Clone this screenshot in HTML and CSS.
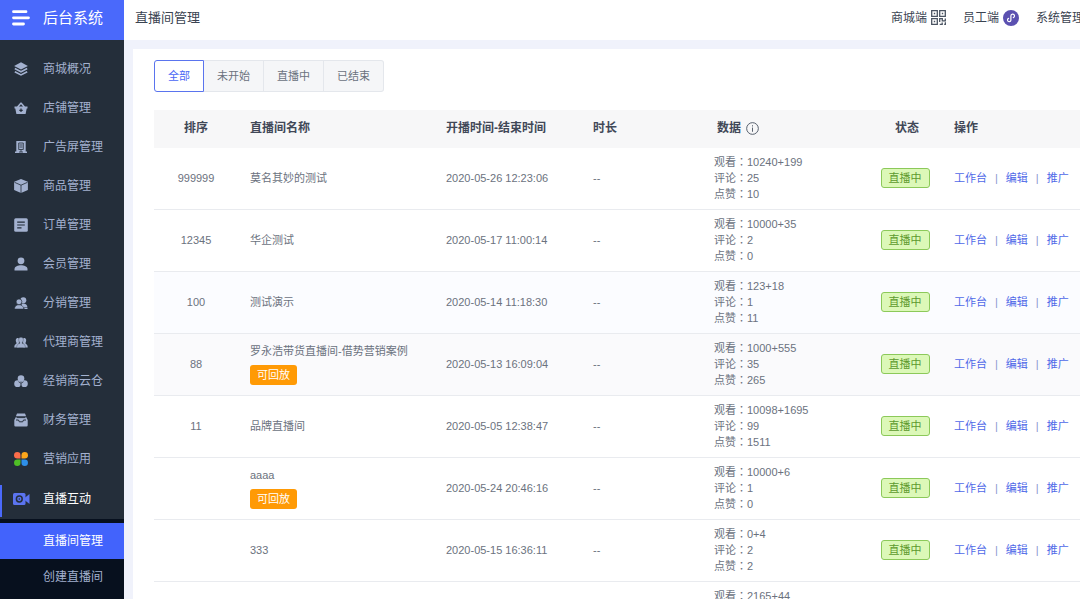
FILE: index.html
```html
<!DOCTYPE html>
<html lang="zh-CN">
<head>
<meta charset="utf-8">
<title>直播间管理</title>
<link rel="stylesheet" href="styles.css">
</head>
<body>
<div class="app">
  <aside class="sidebar">
    <div class="brand">
      <svg class="brand-icon" viewBox="0 0 18 16"><path d="M1.5 1.7H14M1.5 7.8H16.5M1.5 14H11.5" stroke="#fff" stroke-width="2.8" stroke-linecap="round"/></svg>
      <span>后台系统</span>
    </div>
    <nav class="menu">
      <a class="item" href="#"><svg class="ico" viewBox="0 0 14 14"><path d="M7 .3 13.900 4 7 7.600.1 4z"/><path d="M.8 6.500 7 9.700 13.200 6.500M.8 9.700 7 12.900 13.200 9.700" fill="none" stroke="currentColor" stroke-width="1.700"/></svg>商城概况</a>
      <a class="item" href="#"><svg class="ico" viewBox="0 0 14 14"><path d="M.5 5.500H3L6.500 1.500h1L11 5.500h2.500v2h-.8L11.600 13H2.400L1.300 7.500H.5zM5 5.500h4L7 3.200z" fill-rule="evenodd"/><path d="M7 7.500v3.500M5.300 9.300h3.400" stroke="#242e3a" stroke-width="1.200"/></svg>店铺管理</a>
      <a class="item" href="#"><svg class="ico" viewBox="0 0 14 14"><path d="M2.300 1h9.400v10.500H13V13H1v-1.500h1.300z"/><path d="M4.700 3h4.600v6.500H4.700zM7 9.500V12M5 12h4" fill="none" stroke="#242e3a" stroke-width=".8"/><path d="M5.500 5h3M5.500 7h3" stroke="#242e3a" stroke-width=".8"/></svg>广告屏管理</a>
      <a class="item" href="#"><svg class="ico" viewBox="0 0 14 14"><path d="M7 0 13.900 2.800V11L7 14 .1 11V2.800z"/><path d="M.5 3.300 7 6.200l6.500-2.900M7 6.200V14" fill="none" stroke="#242e3a" stroke-width=".8"/></svg>商品管理</a>
      <a class="item" href="#"><svg class="ico" viewBox="0 0 14 14"><rect x=".2" y=".2" width="13.600" height="13.600" rx="1.500"/><path d="M3.200 4.200h7.600M3.200 7h7.600M3.200 9.900h4.300" stroke="#242e3a" stroke-width="1.200"/></svg>订单管理</a>
      <a class="item" href="#"><svg class="ico" viewBox="0 0 14 14"><circle cx="7" cy="3.800" r="3.400"/><path d="M.5 13.500v-1.500C.5 9.400 4 8.200 7 8.200s6.500 1.200 6.500 3.800v1.500z"/></svg>会员管理</a>
      <a class="item" href="#"><svg class="ico" viewBox="0 0 14 14"><circle cx="9.300" cy="4.200" r="3"/><path d="M7.500 7.800c3-.8 5.800.2 6 3.700H8z"/><circle cx="5" cy="5.800" r="2.900" stroke="#242e3a" stroke-width=".7"/><path d="M.5 13c0-2.700 2-4.200 4.500-4.200S9.700 10.300 9.700 13z" stroke="#242e3a" stroke-width=".5"/><path d="M10.500 13h3v-1H10.300z"/></svg>分销管理</a>
      <a class="item" href="#"><svg class="ico" viewBox="0 0 14 14"><path d="M3.800 3C5 3 5.500 4 5.400 5.500L4.800 8v4.500H.3C.2 10 1.200 9.300 2.400 8.700V7.500C1.300 5.500 1.700 3 3.800 3zM10.200 3C9 3 8.500 4 8.600 5.500L9.200 8v4.500h4.500c.1-2.500-.9-3.200-2.100-3.800V7.500c1.100-2 .7-4.500-1.400-4.500z"/><path d="M7 2.300c1.700 0 2.500 1.200 2.300 2.800-.1 1-.5 1.700-.9 2.300v1c1.700.6 3 1.300 3 4.400H2.600c0-3.100 1.300-3.800 3-4.400v-1c-.4-.6-.8-1.300-.9-2.300C4.500 3.500 5.300 2.300 7 2.300z" stroke="#242e3a" stroke-width=".3"/></svg>代理商管理</a>
      <a class="item" href="#"><svg class="ico" viewBox="0 0 14 14"><circle cx="7" cy="4.500" r="3.300"/><circle cx="3.600" cy="9.700" r="3.400"/><circle cx="10.400" cy="9.700" r="3.400"/><path d="M4.500 7.700 7 9.300l2.500-1.600M7 9.300v3" fill="none" stroke="#242e3a" stroke-width=".8"/></svg>经销商云仓</a>
      <a class="item" href="#"><svg class="ico" viewBox="0 0 14 14"><path d="M3 .5h8L12 3H2zM2 3.700h10L13.700 7v5.300q0 1.200-1.200 1.200h-11Q.3 13.500.3 12.300V7z"/><path d="M2.500 4.600h9M2 7h2.500l.8 1.800h3.400L9.500 7H12" fill="none" stroke="#242e3a"/></svg>财务管理</a>
      <a class="item" href="#"><svg class="ico" viewBox="0 0 14 14"><path d="M3.300 0A3.200 3.200 0 1 0 3.300 6.500H6.500V3.200A3.200 3.200 0 0 0 3.300 0z" fill="#fb6d4a"/><path d="M10.700 0a3.200 3.200 0 1 1 0 6.500H7.500V3.200A3.200 3.200 0 0 1 10.700 0z" fill="#fba61b"/><path d="M3.300 14a3.200 3.200 0 1 1 0-6.500h3.200v3.300A3.200 3.200 0 0 1 3.300 14z" fill="#4fbf26"/><path d="M10.700 14a3.200 3.200 0 1 0 0-6.500H7.500v3.300a3.200 3.200 0 0 0 3.200 3.200z" fill="#2e8fe8"/></svg>营销应用</a>
      <a class="item current" href="#"><svg class="ico wide" viewBox="0 0 17 12"><rect width="12.500" height="12" rx="1.500"/><path d="M11.500 5 16.500 1v10l-5-4z"/><circle cx="6.300" cy="6" r="2.900" fill="none" stroke="#242e3a" stroke-width="1.500"/><circle cx="6.300" cy="6" r=".8" fill="#242e3a"/></svg>直播互动</a>
    </nav>
    <nav class="submenu">
      <a class="sub selected" href="#">直播间管理</a>
      <a class="sub" href="#">创建直播间</a>
    </nav>
  </aside>
  <div class="page">
    <header class="topbar">
      <h1 class="title">直播间管理</h1>
      <nav class="links">
        <a class="top-link" href="#">商城端
          <svg class="qr" viewBox="0 0 15 15" fill="none" stroke="#4b5462" stroke-width="1.300"><path d="M.7.7h5.600v5.600H.7zM8.700.7h5.600v5.600H8.700zM.7 8.700h5.600v5.600H.7zM2.800 3.500h1.400M10.800 3.500h1.400M2.800 11.500h1.400M8.700 12V8.700h2.600v2.200h3V8.500M8.700 14.300h2.500v-1.800M13.200 14.300h1.200v-2"/></svg></a>
        <a class="top-link" href="#">员工端
          <svg class="mini" viewBox="0 0 16 16"><circle cx="8" cy="8" r="8" fill="#5b50b0"/><path d="M5.600 8.400a1.700 1.700 0 1 0 2.300 1.700V5.900a1.800 1.800 0 1 1 2.400 1.700" fill="none" stroke="#fff" stroke-width="1.200" stroke-linecap="round"/></svg></a>
        <a class="top-link" href="#">系统管理</a>
      </nav>
    </header>
    <main class="card">
      <div class="tabs">
        <button class="tab on" type="button">全部</button><button class="tab" type="button">未开始</button><button class="tab" type="button">直播中</button><button class="tab" type="button">已结束</button>
      </div>
      <table class="rooms">
        <colgroup><col class="c-sort"><col class="c-name"><col class="c-time"><col class="c-len"><col class="c-data"><col class="c-state"><col></colgroup>
        <thead>
          <tr><th class="mid">排序</th><th>直播间名称</th><th>开播时间-结束时间</th><th>时长</th><th><span class="data-head">数据<svg class="info" viewBox="0 0 14 14" fill="none" stroke="#4b5462"><circle cx="7" cy="7" r="6.300"/><path d="M7 6v4.500M7 3.500v1.300"/></svg></span></th><th class="state-head">状态</th><th>操作</th></tr>
        </thead>
        <tbody>
          <tr><td class="mid">999999</td><td>莫名其妙的测试</td><td>2020-05-26 12:23:06</td><td>--</td><td class="data">观看：10240+199<br>评论：25<br>点赞：10</td><td class="mid"><span class="state">直播中</span></td><td><span class="ops"><a href="#">工作台</a><i>|</i><a href="#">编辑</a><i>|</i><a href="#">推广</a></span></td></tr>
          <tr><td class="mid">12345</td><td>华企测试</td><td>2020-05-17 11:00:14</td><td>--</td><td class="data">观看：10000+35<br>评论：2<br>点赞：0</td><td class="mid"><span class="state">直播中</span></td><td><span class="ops"><a href="#">工作台</a><i>|</i><a href="#">编辑</a><i>|</i><a href="#">推广</a></span></td></tr>
          <tr class="tint"><td class="mid">100</td><td>测试演示</td><td>2020-05-14 11:18:30</td><td>--</td><td class="data">观看：123+18<br>评论：1<br>点赞：11</td><td class="mid"><span class="state">直播中</span></td><td><span class="ops"><a href="#">工作台</a><i>|</i><a href="#">编辑</a><i>|</i><a href="#">推广</a></span></td></tr>
          <tr class="hovered"><td class="mid">88</td><td><div class="name">罗永浩带货直播间-借势营销案例<span class="replay">可回放</span></div></td><td>2020-05-13 16:09:04</td><td>--</td><td class="data">观看：1000+555<br>评论：35<br>点赞：265</td><td class="mid"><span class="state">直播中</span></td><td><span class="ops"><a href="#">工作台</a><i>|</i><a href="#">编辑</a><i>|</i><a href="#">推广</a></span></td></tr>
          <tr><td class="mid">11</td><td>品牌直播间</td><td>2020-05-05 12:38:47</td><td>--</td><td class="data">观看：10098+1695<br>评论：99<br>点赞：1511</td><td class="mid"><span class="state">直播中</span></td><td><span class="ops"><a href="#">工作台</a><i>|</i><a href="#">编辑</a><i>|</i><a href="#">推广</a></span></td></tr>
          <tr><td class="mid"></td><td><div class="name">aaaa<span class="replay">可回放</span></div></td><td>2020-05-24 20:46:16</td><td>--</td><td class="data">观看：10000+6<br>评论：1<br>点赞：0</td><td class="mid"><span class="state">直播中</span></td><td><span class="ops"><a href="#">工作台</a><i>|</i><a href="#">编辑</a><i>|</i><a href="#">推广</a></span></td></tr>
          <tr><td class="mid"></td><td>333</td><td>2020-05-15 16:36:11</td><td>--</td><td class="data">观看：0+4<br>评论：2<br>点赞：2</td><td class="mid"><span class="state">直播中</span></td><td><span class="ops"><a href="#">工作台</a><i>|</i><a href="#">编辑</a><i>|</i><a href="#">推广</a></span></td></tr>
          <tr><td></td><td></td><td></td><td></td><td class="data">观看：2165+44</td><td></td><td></td></tr>
        </tbody>
      </table>
    </main>
  </div>
</div>
</body>
</html>
```
FILE: styles.css
```css
* { box-sizing: border-box; }
body {
  margin: 0;
  font: 11px/16px "Liberation Sans", "Noto Sans CJK SC", sans-serif;
  color: #6b727e;
  background: #f0f2fb;
}
a { color: inherit; text-decoration: none; }
svg { flex: none; display: block; }

.app { display: flex; height: 100vh; overflow: hidden; }

.sidebar { flex: none; width: 124px; background: #242e3a; color: #a3b1cf; font-size: 12px; display: flex; flex-direction: column; }
.brand { flex: none; height: 40px; padding: 0 12px 4px; display: flex; align-items: center; gap: 13px; background: #4a69fb; color: #fff; font-size: 15px; white-space: nowrap; }
.brand-icon { width: 18px; height: 16px; }
.menu { padding-top: 9px; }
.item { height: 39px; padding-left: 14px; display: flex; align-items: center; gap: 15px; white-space: nowrap; }
.ico { width: 14px; height: 14px; fill: currentColor; }
.wide { width: 17px; height: 12px; fill: #5b74f0; }
.current { height: 41px; padding-left: 11px; gap: 13px; color: #fff; border-style: solid; border-width: 0 0 0 2px; border-image: linear-gradient(transparent 8px, #4a69fb 8px 38px, transparent 38px) 1; }
.submenu { flex: 1; padding-top: 4px; background: #07101e; }
.sub { height: 36px; padding-left: 43px; display: flex; align-items: center; white-space: nowrap; }
.selected { background: #4263fc; color: #fff; }

.page { flex: 1; min-width: 0; display: flex; flex-direction: column; }
.topbar { flex: none; height: 40px; padding: 0 0 5px 11px; display: flex; align-items: center; justify-content: space-between; background: #fff; color: #3a4351; overflow: hidden; white-space: nowrap; }
.title { margin: 0; font-size: 13px; font-weight: 400; }
.links { display: flex; align-items: center; gap: 17px; margin-right: -4px; font-size: 12px; }
.top-link { display: flex; align-items: center; gap: 4px; }
.qr { width: 15px; height: 15px; }
.mini { width: 16px; height: 16px; }

.card { flex: 1; min-height: 0; margin: 9px 0 0 9px; padding: 11px 0 0 21px; background: #fff; overflow: hidden; }
.tabs { display: flex; margin-bottom: 18px; }
.tab { height: 32px; padding: 0 13px; border: 1px solid #e4e7ec; border-left-width: 0; background: #f5f6f8; color: #6b727e; font: inherit; }
.tab:last-child { border-radius: 0 3px 3px 0; }
.on { border: 1px solid #5a74ee; border-radius: 3px 0 0 3px; background: #fff; color: #4a66f5; }

.rooms { width: 100%; table-layout: fixed; border-collapse: separate; border-spacing: 0; }
.c-sort { width: 84px; }
.c-name { width: 196px; }
.c-time { width: 147px; }
.c-len { width: 121px; }
.c-data { width: 166px; }
.c-state { width: 74px; }
th { height: 38px; padding: 0 0 2px 12px; background: #f7f7f8; color: #414857; font-size: 12px; font-weight: 700; text-align: left; white-space: nowrap; }
td { height: 62px; padding: 6px 0 7px 12px; border-bottom: 1px solid #e9ebef; white-space: nowrap; }
.mid { padding-left: 0; text-align: center; }
.state-head { padding-left: 4px; text-align: center; }
.data-head { display: flex; align-items: center; gap: 5px; padding-left: 3px; }
.info { width: 13px; height: 13px; }
/* keeps the full-width colon centred in its cell */
.data { font-family: "Liberation Sans", "Noto Sans CJK TC", sans-serif; font-feature-settings: "locl" 0; vertical-align: top; }
.tint { background: #fbfcff; }
.hovered { background: #fafafc; }
.name { display: flex; flex-direction: column; align-items: flex-start; gap: 6px; }
.replay { padding: 2px 7px; border-radius: 3px; background: #ff9a05; color: #fff; }
.state { display: inline-block; padding: 1px 7px; border: 1px solid #8cc95a; border-radius: 3px; background: #dcf8b8; color: #5c9a2d; }
.ops { display: flex; gap: 8px; color: #4f69e8; }
.ops i { font-style: normal; color: #8a95cf; }
```
